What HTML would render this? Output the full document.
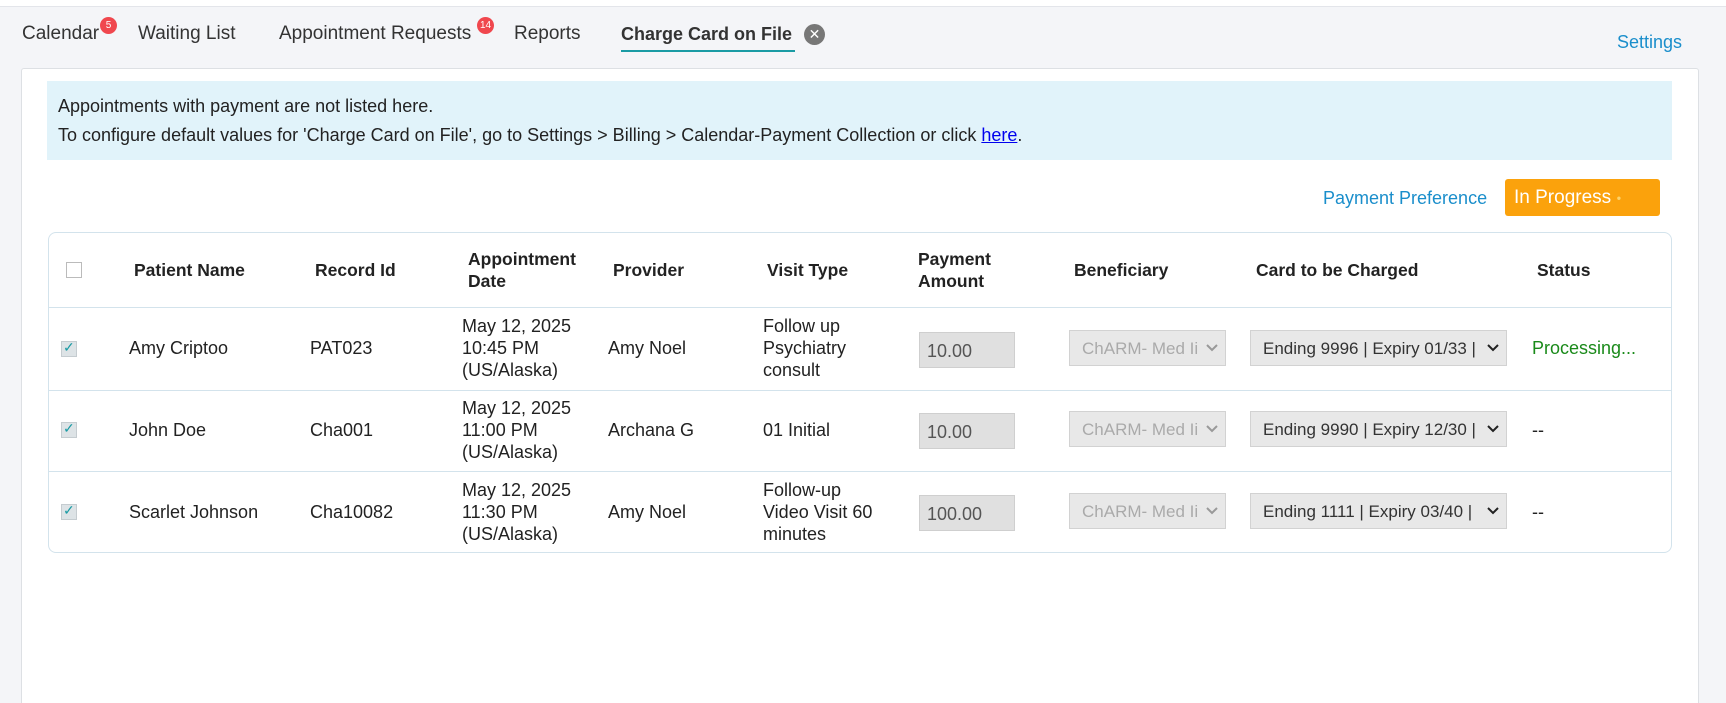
<!DOCTYPE html>
<html style="overflow:hidden;height:703px"><head><meta charset="utf-8"><style>
*{box-sizing:border-box;margin:0;padding:0}
body{width:1726px;height:703px;overflow:hidden;background:#f4f5f8;font-family:"Liberation Sans",sans-serif;color:#222;font-size:18px;position:relative}
.abs{position:absolute;white-space:nowrap}
.topline{position:absolute;left:0;top:0;width:1726px;height:7px;background:#fff;border-bottom:1px solid #e3e5ea}
.tab{position:absolute;top:23px;font-size:19px;color:#333;white-space:nowrap}
.badge{position:absolute;background:#f0474e;color:#fff;border-radius:50%;font-size:10px;width:17px;height:17px;line-height:17px;text-align:center}
.panel{position:absolute;left:21px;top:68px;width:1678px;height:640px;background:#fff;border:1px solid #dde0e4;border-radius:3px}
.info{position:absolute;left:47px;top:81px;width:1625px;height:79px;background:#e1f3fa}
.table{position:absolute;left:48px;top:232px;width:1624px;height:321px;border:1px solid #d3e3ec;border-radius:8px}
.hl{position:absolute;left:49px;width:1622px;height:1px;background:#d3e3ec}
.th{position:absolute;font-weight:bold;font-size:17.5px;color:#222;line-height:22px;white-space:nowrap}
.td{position:absolute;font-size:18px;line-height:22px;color:#222;white-space:nowrap}
.inp{position:absolute;width:96px;height:36px;background:#e0e0e0;border:1px solid #cfcfcf;color:#555;font-size:18px;padding:8px 7px}
.sel{position:absolute;height:36px;background:#e8e8e8;border:1px solid #d2d2d2;font-size:17px;padding:8px 12px;white-space:nowrap;overflow:hidden}
.sel svg{position:absolute;right:0;top:0;height:34px;width:26px;padding:13px 7px;background:#e8e8e8}
.cb{position:absolute;width:16px;height:16px;border:1px solid #bbb;background:#fff}
.cbk{position:absolute;width:16px;height:16px;background:#dde3e6;border:1px solid #c5ccd0}
</style></head><body>
<div class="topline"></div>
<div class="tab" style="left:22px">Calendar</div><div class="badge" style="left:100px;top:17px">5</div>
<div class="tab" style="left:138px">Waiting List</div>
<div class="tab" style="left:279px">Appointment Requests</div><div class="badge" style="left:477px;top:17px">14</div>
<div class="tab" style="left:514px">Reports</div>
<div class="tab" style="left:621px;font-weight:bold;font-size:18px;top:24px">Charge Card on File</div>
<div class="abs" style="left:621px;top:50px;width:174px;height:2px;background:#1a9ba4"></div>
<div class="abs" style="left:804px;top:24px;width:21px;height:21px;border-radius:50%;background:#777;color:#fff;font-size:14px;text-align:center;line-height:21px">✕</div>
<div class="abs" style="left:1617px;top:32px;color:#1a8ecb;font-size:18px">Settings</div>
<div class="panel"></div>
<div class="info"></div>
<div class="abs" style="left:58px;top:96px;font-size:18px">Appointments with payment are not listed here.</div>
<div class="abs" style="left:58px;top:125px;font-size:18px">To configure default values for 'Charge Card on File', go to Settings &gt; Billing &gt; Calendar-Payment Collection or click <span style="color:#00e;text-decoration:underline">here</span>.</div>
<div class="abs" style="left:1323px;top:188px;color:#1a8ecb;font-size:18px">Payment Preference</div>
<div class="abs" style="left:1505px;top:179px;width:155px;height:37px;background:#fba20c;border-radius:3px;color:#fff;font-size:19px;padding:8px 9px">In Progress <span style="font-size:8px;color:#fcd36b;vertical-align:middle">●</span></div>
<div class="table"></div>
<div class="hl" style="top:307px"></div>
<div class="hl" style="top:390px"></div>
<div class="hl" style="top:471px"></div>
<div class="cb" style="left:66px;top:262px"></div>
<div class="th" style="left:134px;top:259px">Patient Name</div>
<div class="th" style="left:315px;top:259px">Record Id</div>
<div class="th" style="left:468px;top:248px">Appointment<br>Date</div>
<div class="th" style="left:613px;top:259px">Provider</div>
<div class="th" style="left:767px;top:259px">Visit Type</div>
<div class="th" style="left:918px;top:248px">Payment<br>Amount</div>
<div class="th" style="left:1074px;top:259px">Beneficiary</div>
<div class="th" style="left:1256px;top:259px">Card to be Charged</div>
<div class="th" style="left:1537px;top:259px">Status</div>

<div class="cbk" style="left:61px;top:341px"><span style="position:absolute;left:1px;top:-3px;color:#1a9ba4;font-size:14px">✓</span></div>
<div class="td" style="left:129px;top:337px">Amy Criptoo</div>
<div class="td" style="left:310px;top:337px">PAT023</div>
<div class="td" style="left:462px;top:315px">May 12, 2025<br>10:45 PM<br>(US/Alaska)</div>
<div class="td" style="left:608px;top:337px">Amy Noel</div>
<div class="td" style="left:763px;top:315px">Follow up<br>Psychiatry<br>consult</div>
<div class="inp" style="left:919px;top:332px">10.00</div>
<div class="sel" style="left:1069px;top:330px;width:157px;color:#aaa">ChARM- Med Ii<svg viewBox="0 0 12 8"><path d="M1 1l5 5 5-5" stroke="#999" stroke-width="2" fill="none"/></svg></div>
<div class="sel" style="left:1250px;top:330px;width:257px;color:#333">Ending 9996 | Expiry 01/33 |<svg viewBox="0 0 12 8"><path d="M1 1l5 5 5-5" stroke="#222" stroke-width="2" fill="none"/></svg></div>
<div class="td" style="left:1532px;top:337px;color:#1a8a1a">Processing...</div>

<div class="cbk" style="left:61px;top:422px"><span style="position:absolute;left:1px;top:-3px;color:#1a9ba4;font-size:14px">✓</span></div>
<div class="td" style="left:129px;top:419px">John Doe</div>
<div class="td" style="left:310px;top:419px">Cha001</div>
<div class="td" style="left:462px;top:397px">May 12, 2025<br>11:00 PM<br>(US/Alaska)</div>
<div class="td" style="left:608px;top:419px">Archana G</div>
<div class="td" style="left:763px;top:419px">01 Initial</div>
<div class="inp" style="left:919px;top:413px">10.00</div>
<div class="sel" style="left:1069px;top:411px;width:157px;color:#aaa">ChARM- Med Ii<svg viewBox="0 0 12 8"><path d="M1 1l5 5 5-5" stroke="#999" stroke-width="2" fill="none"/></svg></div>
<div class="sel" style="left:1250px;top:411px;width:257px;color:#333">Ending 9990 | Expiry 12/30 |<svg viewBox="0 0 12 8"><path d="M1 1l5 5 5-5" stroke="#222" stroke-width="2" fill="none"/></svg></div>
<div class="td" style="left:1532px;top:419px">--</div>

<div class="cbk" style="left:61px;top:504px"><span style="position:absolute;left:1px;top:-3px;color:#1a9ba4;font-size:14px">✓</span></div>
<div class="td" style="left:129px;top:501px">Scarlet Johnson</div>
<div class="td" style="left:310px;top:501px">Cha10082</div>
<div class="td" style="left:462px;top:479px">May 12, 2025<br>11:30 PM<br>(US/Alaska)</div>
<div class="td" style="left:608px;top:501px">Amy Noel</div>
<div class="td" style="left:763px;top:479px">Follow-up<br>Video Visit 60<br>minutes</div>
<div class="inp" style="left:919px;top:495px">100.00</div>
<div class="sel" style="left:1069px;top:493px;width:157px;color:#aaa">ChARM- Med Ii<svg viewBox="0 0 12 8"><path d="M1 1l5 5 5-5" stroke="#999" stroke-width="2" fill="none"/></svg></div>
<div class="sel" style="left:1250px;top:493px;width:257px;color:#333">Ending 1111 | Expiry 03/40 |<svg viewBox="0 0 12 8"><path d="M1 1l5 5 5-5" stroke="#222" stroke-width="2" fill="none"/></svg></div>
<div class="td" style="left:1532px;top:501px">--</div>
</body></html>
